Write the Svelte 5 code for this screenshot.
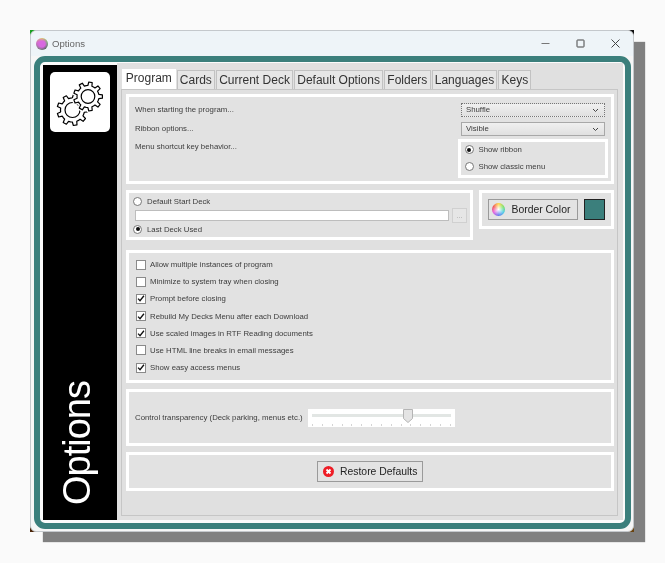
<script>
  const tabs = ['Program', 'Cards', 'Current Deck', 'Default Options', 'Folders', 'Languages', 'Keys'];
  const checks = [
    { label: 'Allow multiple instances of program', on: false },
    { label: 'Minimize to system tray when closing', on: false },
    { label: 'Prompt before closing', on: true },
    { label: 'Rebuild My Decks Menu after each Download', on: true },
    { label: 'Use scaled images in RTF Reading documents', on: true },
    { label: 'Use HTML line breaks in email messages', on: false },
    { label: 'Show easy access menus', on: true }
  ];
  const ticks = Array.from({ length: 15 });

  // outline of a cog, teeth on the outside
  function gear(cx, cy, r, teeth, depth) {
    const step = (Math.PI * 2) / teeth;
    let d = '';
    for (let i = 0; i < teeth; i++) {
      const a = i * step;
      const pts = [
        [r - depth, a - step * 0.5],
        [r - depth, a - step * 0.27],
        [r, a - step * 0.17],
        [r, a + step * 0.17],
        [r - depth, a + step * 0.27]
      ];
      for (const [rad, ang] of pts) {
        const x = (cx + rad * Math.cos(ang)).toFixed(2);
        const y = (cy + rad * Math.sin(ang)).toFixed(2);
        d += (d ? 'L' : 'M') + x + ' ' + y;
      }
    }
    return d + 'Z';
  }
</script>

<div class="page">
  <div class="window">
    <div class="chrome">
      <div class="titlebar">
        <span class="app-icon"></span>
        <span class="title">Options</span>
        <div class="controls">
          <svg width="9" height="9" viewBox="0 0 9 9"><path d="M0.5 4.5h8" stroke="#777" fill="none" /></svg>
          <svg width="9" height="9" viewBox="0 0 9 9"><rect x="1" y="1" width="7" height="7" rx="0.5" stroke="#444" fill="none" /></svg>
          <svg width="9" height="9" viewBox="0 0 9 9"><path d="M0.5 0.5l8 8M8.5 0.5l-8 8" stroke="#444" fill="none" /></svg>
        </div>
      </div>

      <div class="frame">
        <aside class="side">
          <div class="logo">
            <svg width="60" height="60" viewBox="0 0 60 60">
              <g fill="none" stroke="#000" stroke-width="1.2" stroke-linejoin="round">
                <path d={gear(22.5, 38, 15.5, 9, 3.5)} fill="#fff" />
                <circle cx="22.5" cy="38" r="7.5" />
                <path d={gear(38, 24.5, 14.5, 9, 3.5)} fill="#fff" stroke="#fff" stroke-width="4" />
                <path d={gear(38, 24.5, 14.5, 9, 3.5)} />
                <circle cx="38" cy="24.5" r="6.8" />
              </g>
            </svg>
          </div>
          <div class="side-title">Options</div>
        </aside>

        <main class="main">
          <div class="tabs">
            {#each tabs as tab, i}
              <div class="tab" class:active={i === 0}>{tab}</div>
            {/each}
          </div>

          <div class="tabpage">
            <section class="panel startup">
              <div class="labels">
                <span>When starting the program...</span>
                <span>Ribbon options...</span>
                <span>Menu shortcut key behavior...</span>
              </div>
              <div class="startup-right">
                <div class="select focused">Shuffle<svg width="7" height="5" viewBox="0 0 7 5"><path d="M1 1l2.5 2.5L6 1" stroke="#444" fill="none" /></svg></div>
                <div class="select">Visible<svg width="7" height="5" viewBox="0 0 7 5"><path d="M1 1l2.5 2.5L6 1" stroke="#444" fill="none" /></svg></div>
                <div class="panel menu-mode">
                  <div class="radio-row"><span class="radio on"></span>Show ribbon</div>
                  <div class="radio-row"><span class="radio"></span>Show classic menu</div>
                </div>
              </div>
            </section>

            <div class="row">
              <section class="panel deck">
                <div class="radio-row"><span class="radio"></span>Default Start Deck</div>
                <div class="deck-path">
                  <input type="text" />
                  <span class="browse">...</span>
                </div>
                <div class="radio-row"><span class="radio on"></span>Last Deck Used</div>
              </section>
              <section class="panel border-color">
                <div class="btn color-btn"><span class="wheel"></span>Border Color</div>
                <span class="swatch"></span>
              </section>
            </div>

            <section class="panel checks">
              {#each checks as c}
                <div class="check-row">
                  <span class="box">
                    {#if c.on}
                      <svg width="9" height="9" viewBox="0 0 9 9"><path d="M1.2 4.6l2.2 2.4L7.8 1.4" stroke="#111" stroke-width="1.5" fill="none" /></svg>
                    {/if}
                  </span>
                  {c.label}
                </div>
              {/each}
            </section>

            <section class="panel transparency">
              <span class="trans-label">Control transparency (Deck parking, menus etc.)</span>
              <div class="slider">
                <div class="track"></div>
                <svg class="thumb" width="10" height="14" viewBox="0 0 10 14"><path d="M0.5 0.5h9v9l-4.5 4-4.5-4z" fill="#e4e4e4" stroke="#b5b5b5" /></svg>
                <div class="ticks">
                  {#each ticks as _}<i></i>{/each}
                </div>
              </div>
            </section>

            <section class="panel restore">
              <div class="btn restore-btn">
                <svg width="11" height="11" viewBox="0 0 11 11">
                  <circle cx="5.5" cy="5.5" r="5.5" fill="#ee1c25" />
                  <path d="M3.5 3.5l4 4M7.5 3.5l-4 4" stroke="#fff" stroke-width="1.8" fill="none" />
                </svg>
                <span>Restore Defaults</span>
              </div>
            </section>
          </div>
        </main>
      </div>
    </div>
  </div>
</div>

<style>
  :global(body) {
    margin: 0;
    background: #fafafa;
  }

  .page {
    width: 665px;
    height: 563px;
    padding: 30px 0 0 30px;
    box-sizing: border-box;
    font-family: "Liberation Sans", Arial, sans-serif;
    font-size: 7.8px;
    line-height: 13px;
    color: #3c3c3c;
  }

  .window {
    width: 604px;
    height: 502px;
    box-shadow: 12px 11px 1px -1px #808080;
    /* the little bits of desktop showing at the rounded corners */
    background:
      linear-gradient(#18a020, #18a020) left top / 7px 7px no-repeat,
      linear-gradient(#111, #111) right top / 7px 7px no-repeat,
      linear-gradient(#4a2408, #4a2408) left bottom / 7px 7px no-repeat,
      linear-gradient(#6a4410, #6a4410) right bottom / 7px 7px no-repeat,
      #fafafa;
  }

  .chrome {
    height: 100%;
    box-sizing: border-box;
    border: 1px solid #c4c8cc;
    border-radius: 6px;
    background: #f6f6f6;
    display: flex;
    flex-direction: column;
    /* the reference is a scaled-down capture, everything is a bit soft */
    filter: blur(0.35px);
  }

  .titlebar {
    height: 25px;
    flex: none;
    display: flex;
    align-items: center;
    padding-left: 5px;
    background: #eef4f8;
    border-radius: 6px 6px 0 0;
  }

  .app-icon {
    width: 12px;
    height: 12px;
    border-radius: 50%;
    background: radial-gradient(circle at 50% 50%, #d868e0 0 35%, transparent 70%),
      conic-gradient(#e0c860, #70b070, #50605c, #808080, #d070c0, #e0c860);
  }

  .title {
    margin-left: 4px;
    font-size: 9.6px;
    color: #666;
  }

  .controls {
    margin-left: auto;
    display: flex;
    gap: 26px;
    padding-right: 13px;
  }

  .frame {
    height: 473px;
    margin-left: 3px;
    width: 597px;
    box-sizing: border-box;
    border: 6px solid #3b7f7c;
    border-radius: 11px;
    background: #fbfbfb;
    display: flex;
    padding: 1px 2px 3px 3px;
  }

  .side {
    width: 74px;
    margin-top: 2px;
    flex: none;
    background: #000;
    display: flex;
    flex-direction: column;
    align-items: center;
  }

  .logo {
    width: 60px;
    height: 60px;
    margin-top: 7px;
    border-radius: 5px;
    background: #fff;
    display: flex;
  }

  .side-title {
    margin-top: auto;
    margin-bottom: 15px;
    margin-right: 7px;
    writing-mode: vertical-rl;
    transform: rotate(180deg);
    color: #fff;
    font-size: 38px;
    letter-spacing: -1px;
    line-height: 46px;
  }

  .main {
    flex: 1;
    background: #e0e0e0;
    padding: 6px 5px 4px 4px;
    display: flex;
    flex-direction: column;
  }

  .tabs {
    display: flex;
    padding-left: 1px;
    gap: 1px;
    height: 20px;
    flex: none;
    position: relative;
    z-index: 1;
  }

  .tab {
    margin-top: 1px;
    height: 18px;
    padding: 0 2.2px;
    border: 1px solid #c2c2c2;
    border-bottom: 0;
    font-size: 12px;
    line-height: 18px;
    color: #333;
    background: #e6e6e6;
    white-space: nowrap;
  }

  .tab.active {
    margin-top: 0;
    height: 20px;
    padding: 0 3.8px;
    border: 0;
    background: #fff;
    font-size: 12px;
    line-height: 18px;
  }

  .tabpage {
    flex: 1;
    border: 1px solid #c6c6c6;
    padding: 4px 3px 0 4px;
    display: flex;
    flex-direction: column;
    gap: 6px;
  }

  .panel {
    border: 3px solid #fff;
    background: #e2e2e2;
    box-sizing: border-box;
  }

  .startup {
    height: 90px;
    flex: none;
    display: flex;
    justify-content: space-between;
    padding: 6px 3px 0 6px;
  }

  .labels {
    display: flex;
    flex-direction: column;
    gap: 5.5px;
  }

  .startup-right {
    width: 150px;
    display: flex;
    flex-direction: column;
    align-items: center;
  }

  .select {
    width: 144px;
    height: 14px;
    box-sizing: border-box;
    margin-bottom: 5px;
    padding: 0 5px 0 4px;
    border: 1px solid #a8a8a8;
    background: linear-gradient(#f0f0f0, #e0e0e0);
    line-height: 12px;
    display: flex;
    align-items: center;
    justify-content: space-between;
  }

  .select.focused {
    border: 1px dotted #777;
  }

  .menu-mode {
    width: 150px;
    height: 39px;
    margin-top: -2px;
    padding: 1px 0 0 3.5px;
    display: flex;
    flex-direction: column;
    gap: 3.5px;
  }

  .radio-row {
    display: flex;
    align-items: center;
    gap: 5px;
    height: 13px;
  }

  .radio {
    width: 9px;
    height: 9px;
    border: 1px solid #777;
    border-radius: 50%;
    background: #fff;
    box-sizing: border-box;
    position: relative;
  }

  .radio.on::after {
    content: '';
    position: absolute;
    inset: 1.5px;
    border-radius: 50%;
    background: #111;
  }

  .row {
    display: flex;
    gap: 6px;
    align-items: flex-start;
    height: 50px;
    flex: none;
    margin-bottom: 4px;
  }

  .deck {
    width: 347px;
    height: 50px;
    padding: 1.5px 3px 0 4px;
  }

  .deck-path {
    display: flex;
    align-items: center;
    gap: 3px;
    height: 15px;
    padding-left: 2px;
  }

  .deck-path input {
    width: 314px;
    height: 11px;
    padding: 0;
    box-sizing: border-box;
    border: 1px solid #bdbdbd;
    background: #fff;
    outline: none;
  }

  .browse {
    width: 15px;
    height: 15px;
    box-sizing: border-box;
    border: 1px solid #d0d0d0;
    background: #e6e6e6;
    color: #aaa;
    font-size: 8px;
    line-height: 14px;
    text-align: center;
  }

  .border-color {
    width: 135px;
    height: 39px;
    padding: 6px;
    display: flex;
    gap: 6px;
  }

  .btn {
    height: 21px;
    box-sizing: border-box;
    border: 1px solid #9a9a9a;
    background: #e3e3e3;
    color: #222;
    font-size: 10.4px;
    white-space: nowrap;
    display: flex;
    align-items: center;
  }

  .color-btn {
    width: 90px;
    padding-left: 3px;
    gap: 6.5px;
  }

  .wheel {
    width: 13px;
    height: 13px;
    border-radius: 50%;
    background: radial-gradient(circle, #fff 0, transparent 70%),
      conic-gradient(#ffd23c, #6ee05a, #3cc8e6, #5a6ef0, #e650dc, #f04646, #ffd23c);
  }

  .swatch {
    width: 21px;
    height: 21px;
    box-sizing: border-box;
    border: 1px solid #222;
    background: #3b7f7c;
  }

  .checks {
    height: 133px;
    flex: none;
    padding: 5px 0 0 7px;
    display: flex;
    flex-direction: column;
    gap: 4.2px;
  }

  .check-row {
    display: flex;
    align-items: center;
    gap: 4px;
    height: 13px;
  }

  .box {
    width: 10px;
    height: 10px;
    box-sizing: border-box;
    border: 1px solid #8a8a8a;
    background: #fff;
    display: flex;
    align-items: center;
    justify-content: center;
  }

  .transparency {
    height: 57px;
    flex: none;
    padding-left: 6px;
    display: flex;
    align-items: center;
  }

  .trans-label {
    width: 173px;
    white-space: nowrap;
  }

  .slider {
    width: 147px;
    height: 18px;
    background: #fff;
    position: relative;
  }

  .track {
    position: absolute;
    left: 4px;
    right: 4px;
    top: 5px;
    height: 3px;
    background: #e2e6e4;
  }

  .thumb {
    position: absolute;
    left: 95px;
    top: 0;
  }

  .ticks {
    position: absolute;
    left: 4px;
    right: 4px;
    bottom: 1px;
    height: 2px;
    display: flex;
    justify-content: space-between;
  }

  .ticks i {
    width: 1px;
    background: #d4d4d4;
  }

  .restore {
    height: 39px;
    flex: none;
    display: flex;
    align-items: center;
    justify-content: center;
  }

  .restore-btn {
    width: 106px;
    padding-left: 5px;
    gap: 6px;
  }
</style>
